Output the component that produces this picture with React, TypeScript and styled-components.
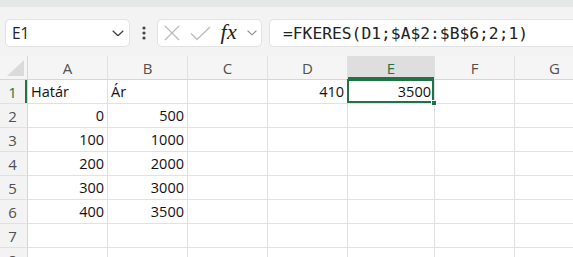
import React from 'react'
import styled, { createGlobalStyle } from 'styled-components'

const GlobalStyle = createGlobalStyle`
  html, body {
    margin: 0;
    padding: 0;
    background: #f3f3f3;
    overflow: hidden;
  }
  * {
    box-sizing: border-box;
  }
`

const GREEN = '#217346'

const Window = styled.div`
  width: 573px;
  height: 257px;
  overflow: hidden;
  display: flex;
  flex-direction: column;
  background: #f3f3f3;
  font-family: 'Open Sans', 'Noto Sans', sans-serif;
`

const TopStrip = styled.div`
  height: 7px;
  flex: none;
  background: #e6e7e7;
`

const FormulaBar = styled.div`
  display: flex;
  align-items: center;
  height: 28px;
  flex: none;
  margin-top: 12px;
  padding-left: 5px;
`

const Box = styled.div`
  height: 28px;
  background: #fff;
  border: 1px solid #e2e2e2;
  border-radius: 5px;
  display: flex;
  align-items: center;
`

const NameBox = styled(Box)`
  width: 125px;
  flex: none;
  padding: 0 5px 0 6px;
  justify-content: space-between;
  font-size: 15.5px;
  color: #222;
`

const DotsWrap = styled.div`
  width: 27px;
  flex: none;
  display: flex;
  justify-content: center;
`

const FxBox = styled(Box)`
  width: 105px;
  flex: none;
  padding: 0 4px 0 6px;
  justify-content: space-between;
`

const Fx = styled.span`
  font-family: 'Liberation Serif', 'DejaVu Serif', serif;
  font-style: italic;
  font-size: 22px;
  color: #222;
  line-height: 1;
  margin-top: -2px;
  letter-spacing: 0.5px;
`

const FormulaInput = styled(Box)`
  flex: none;
  width: 330px;
  margin-left: 7px;
  border-radius: 5px 0 0 5px;
  border-right: none;
  padding-left: 13px;
  font-family: 'DejaVu Sans Mono', 'Liberation Mono', monospace;
  font-size: 16.3px;
  color: #222;
  white-space: nowrap;
`

const Sheet = styled.div`
  margin-top: 9px;
  flex: 1;
  display: grid;
  grid-template-columns: 28px 80px 80px 80px 80px 87px 80px 80px;
  grid-auto-rows: 24px;
  background: #fff;
  font-size: 14.5px;
`

const Corner = styled.div`
  background: #f5f5f5;
  border-right: 1px solid #d6d6d6;
  border-bottom: 1px solid #d6d6d6;
  display: flex;
  align-items: flex-end;
  justify-content: flex-end;
  padding: 0 3px 3px 0;
`

const ColHeader = styled.div<{ $active?: boolean }>`
  background: ${({ $active }) => ($active ? '#dedede' : '#f5f5f5')};
  color: ${({ $active }) => ($active ? GREEN : '#505050')};
  border-right: 1px solid #e0e0e0;
  border-bottom: 1px solid #d6d6d6;
  box-shadow: ${({ $active }) => ($active ? `inset 0 -2px 0 ${GREEN}` : 'none')};
  display: flex;
  align-items: center;
  justify-content: center;
  font-size: 15px;
  padding-top: 1px;
`

const RowHeader = styled.div<{ $active?: boolean }>`
  background: #f3f3f3;
  color: ${({ $active }) => ($active ? GREEN : '#505050')};
  border-right: 1px solid #d6d6d6;
  border-bottom: 1px solid #e0e0e0;
  box-shadow: ${({ $active }) => ($active ? `inset -2px 0 0 ${GREEN}` : 'none')};
  display: flex;
  align-items: center;
  justify-content: center;
  font-size: 15px;
  padding-right: 2px;
`

const Cell = styled.div<{ $align?: 'left' | 'right'; $selected?: boolean }>`
  position: relative;
  border-right: 1px solid #e1e1e1;
  border-bottom: 1px solid #e1e1e1;
  display: flex;
  align-items: center;
  justify-content: ${({ $align }) => ($align === 'right' ? 'flex-end' : 'flex-start')};
  padding: 0 3px 0 3px;
  color: #111;
  white-space: nowrap;

  ${({ $selected }) =>
    $selected &&
    `
    &::after {
      content: '';
      position: absolute;
      top: -1px;
      left: -1px;
      right: 0;
      bottom: 0;
      border: 2px solid ${GREEN};
      pointer-events: none;
    }
  `}
`

const Handle = styled.span`
  position: absolute;
  right: -3px;
  bottom: -3px;
  width: 6px;
  height: 6px;
  background: ${GREEN};
  border: 1px solid #fff;
  z-index: 2;
`

const columns = ['A', 'B', 'C', 'D', 'E', 'F', 'G']

type CellValue = { v: string; align: 'left' | 'right' }

const data: Record<number, Record<string, CellValue>> = {
  1: {
    A: { v: 'Határ', align: 'left' },
    B: { v: 'Ár', align: 'left' },
    D: { v: '410', align: 'right' },
    E: { v: '3500', align: 'right' },
  },
}
const limits = ['0', '100', '200', '300', '400']
const prices = ['500', '1000', '2000', '3000', '3500']
limits.forEach((l, i) => {
  data[i + 2] = {
    A: { v: l, align: 'right' },
    B: { v: prices[i], align: 'right' },
  }
})

const ChevronDown = ({ color, w = 12 }: { color: string; w?: number }) => (
  <svg width={w} height={w * 0.55} viewBox="0 0 12 6.6">
    <path d="M0.7 0.7 L6 5.8 L11.3 0.7" fill="none" stroke={color} strokeWidth="1.3" />
  </svg>
)

const App: React.FC = () => {
  const rows = [1, 2, 3, 4, 5, 6, 7, 8]
  return (
    <>
      <GlobalStyle />
      <Window>
        <TopStrip />
        <FormulaBar>
          <NameBox>
            <span>E1</span>
            <ChevronDown color="#444" w={12} />
          </NameBox>
          <DotsWrap>
            <svg width="4" height="14" viewBox="0 0 4 14">
              <circle cx="2" cy="2" r="1.6" fill="#444" />
              <circle cx="2" cy="7" r="1.6" fill="#444" />
              <circle cx="2" cy="12" r="1.6" fill="#444" />
            </svg>
          </DotsWrap>
          <FxBox>
            <svg width="16" height="16" viewBox="0 0 16 16">
              <path d="M1 1 L15 15 M15 1 L1 15" stroke="#bdbdbd" strokeWidth="1.4" fill="none" />
            </svg>
            <svg width="21" height="15" viewBox="0 0 21 15">
              <path d="M1 7.5 L7 13.5 L20 1" stroke="#bdbdbd" strokeWidth="1.4" fill="none" />
            </svg>
            <Fx>fx</Fx>
            <ChevronDown color="#888" w={10} />
          </FxBox>
          <FormulaInput>=FKERES(D1;$A$2:$B$6;2;1)</FormulaInput>
        </FormulaBar>
        <Sheet>
          <Corner>
            <svg width="17" height="16" viewBox="0 0 17 16">
              <path d="M17 0 L17 16 L0 16 Z" fill="#dadada" />
            </svg>
          </Corner>
          {columns.map((c) => (
            <ColHeader key={c} $active={c === 'E'}>
              {c}
            </ColHeader>
          ))}
          {rows.map((r) => (
            <React.Fragment key={r}>
              <RowHeader $active={r === 1}>{r}</RowHeader>
              {columns.map((c) => {
                const cell = data[r]?.[c]
                const selected = r === 1 && c === 'E'
                return (
                  <Cell key={c} $align={cell?.align} $selected={selected}>
                    {cell?.v}
                    {selected && <Handle />}
                  </Cell>
                )
              })}
            </React.Fragment>
          ))}
        </Sheet>
      </Window>
    </>
  )
}

export default App
